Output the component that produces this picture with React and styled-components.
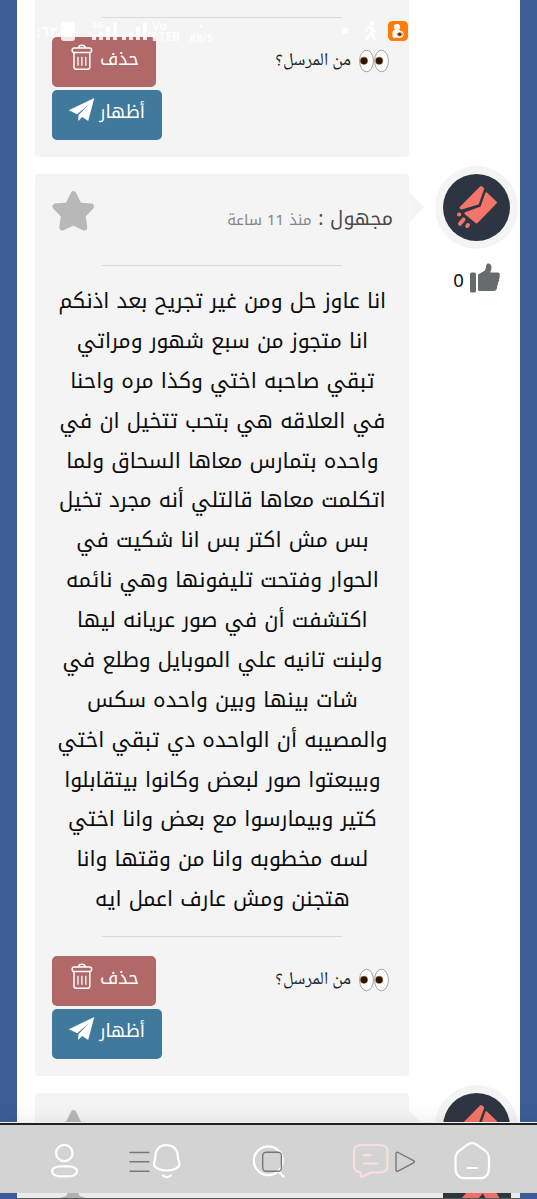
import styled, { createGlobalStyle } from "styled-components";

const GlobalStyle = createGlobalStyle`
  * {
    box-sizing: border-box;
  }

  body {
    margin: 0;
    font-family: "Noto Kufi Arabic", "Noto Sans", sans-serif;
  }
`;

const Page = styled.div`
  position: relative;
  height: 1199px;
  overflow: hidden;
  padding: 0 17px;
  background: #3d5c96;
`;

const Feed = styled.main`
  display: flex;
  flex-direction: column;
  gap: 17.5px;
  height: 1199px;
  padding-left: 18.4px;
  background: #fff;
`;

const Post = styled.article`
  display: flex;
  flex-shrink: 0;
`;

const Card = styled.section`
  width: 374px;
  height: ${({ $height }) => $height}px;
  flex-shrink: 0;
  background: #f4f4f4;
  border-radius: ${({ $cut }) => ($cut ? "0 0 4px 4px" : "4px")};
  padding: 0 16.5px;
  direction: rtl;
`;

const CutCard = styled(Card)`
  padding-top: 17px;
`;

const CardHeader = styled.header`
  display: flex;
  justify-content: space-between;
  height: 91px;
  padding-top: 16px;
`;

const Sender = styled.div`
  display: flex;
  align-items: baseline;
  height: 50px;
  margin-top: 3.5px;
  line-height: 50px;
  font-size: 19.6px;
  color: #4b4b4b;
  white-space: pre;
`;

const Time = styled.span`
  font-size: 15px;
  color: #858585;
`;

const Divider = styled.hr`
  width: 240px;
  height: 1px;
  margin: 0 auto;
  border: 0;
  background: #dadada;
`;

const Message = styled.p`
  margin: 16px -10px;
  text-align: center;
  font-size: 21.1px;
  line-height: 39.87px;
  color: #0d0d0d;
  white-space: pre-line;
`;

const CardFooter = styled.footer`
  display: flex;
  justify-content: space-between;
  align-items: flex-start;
  padding-top: 19px;
`;

const Question = styled.div`
  display: flex;
  align-items: center;
  gap: 8px;
  margin-right: 4px;
  height: 48px;
  font-family: "Noto Naskh Arabic", "Noto Sans", sans-serif;
  font-size: 18px;
  color: #222;
`;

const Actions = styled.div`
  display: flex;
  flex-direction: column;
  align-items: flex-end;
  gap: 2.5px;
`;

const ActionButton = styled.button`
  display: flex;
  justify-content: space-between;
  align-items: flex-start;
  width: ${({ $wide }) => ($wide ? 110.5 : 104)}px;
  height: 50px;
  padding: ${({ $wide }) => ($wide ? "0 17.5px 0 16px" : "0 17px 0 19px")};
  border: 0;
  border-radius: 5px;
  background: ${({ $wide }) => ($wide ? "#41799c" : "#b06868")};
  color: #fff;
  font-family: inherit;
  font-size: 18px;
  line-height: 44px;
  direction: rtl;

  svg {
    margin-top: 7px;
  }
`;

const Aside = styled.aside`
  display: flex;
  flex-direction: column;
  align-items: center;
  width: 110.5px;
  flex-shrink: 0;
`;

const AvatarRow = styled.div`
  display: flex;
  align-items: center;
  margin-top: -8.5px;
  width: 100%;
`;

const Arrow = styled.span`
  width: 15px;
  height: 30px;
  margin: 0 10.5px 0 0;
  background: #f4f4f4;
  clip-path: polygon(0 0, 100% 50%, 0 100%);
`;

const Avatar = styled.span`
  display: flex;
  width: 83px;
  height: 83px;
  padding: 8px;
  border-radius: 50%;
  background: #f4f4f4;
  flex-shrink: 0;
`;

const Likes = styled.div`
  display: flex;
  align-items: center;
  gap: 6px;
  margin: 16.5px 0 0 24px;
  font-family: "Noto Sans", sans-serif;
  font-size: 18.5px;
  line-height: 30px;
  color: #111;

  svg {
    margin-top: -5px;
  }
`;

// Phone overlays, drawn over the scrolled page
const StatusBar = styled.div`
  position: absolute;
  top: 20px;
  left: 35px;
  right: 129px;
  height: 24px;
  display: flex;
  align-items: flex-start;
  color: rgba(255, 255, 255, 0.85);
  font-family: "Noto Sans", "Noto Sans Arabic", sans-serif;
  font-weight: 700;
`;

const Clock = styled.span`
  display: flex;
  justify-content: flex-end;
  width: 25px;
  padding-right: 2px;
  font-size: 15px;
  line-height: 22px;
`;

const Battery = styled.span`
  width: 14px;
  height: 19px;
  margin: 2px 17px 0 1px;
  border-radius: 3px;
  background: rgba(255, 255, 255, 0.85);
`;

const Signal = styled.span`
  display: flex;
  align-items: flex-end;
  gap: 3px;
  width: 30px;
  height: 20px;

  i {
    width: 4px;
    background: rgba(255, 255, 255, 0.85);
  }
  i:nth-of-type(1) {
    height: 5px;
  }
  i:nth-of-type(2) {
    height: 8px;
  }
  i:nth-of-type(3) {
    height: 13px;
  }
  i:nth-of-type(4) {
    height: 18px;
  }
`;

const NetType = styled.span`
  width: 20px;
  margin-right: -20px;
  font-size: 8.5px;
  line-height: 10px;
`;

const Volte = styled.span`
  width: 34px;
  font-size: 12px;
  line-height: 11px;
  white-space: pre-line;
`;

const Speed = styled.span`
  width: 30px;
  font-size: 10px;
  line-height: 12px;
  text-align: center;
  white-space: pre-line;
`;

const StatusRight = styled.span`
  display: flex;
  align-items: center;
  gap: 10px;
  height: 22px;
  margin-left: auto;
`;

const Dot = styled.span`
  width: 6px;
  height: 6px;
  margin-right: 6px;
  border-radius: 50%;
  background: #fff;
`;

const Nav = styled.nav`
  position: absolute;
  top: 1122px;
  left: 0;
  right: 0;
  height: 71px;
  border-top: 1px solid #f2f2f2;
  background: #d3d3d3;
  box-shadow: 0 -2px 18px rgba(0, 0, 0, 0.08);

  &::before {
    content: "";
    display: block;
    height: 1.5px;
    background: #222;
  }

  svg {
    display: block;
  }
`;

const BottomStrip = styled.div`
  position: absolute;
  top: 1193px;
  left: 17px;
  right: 17px;
  height: 6px;
  overflow: hidden;
  display: flex;
  justify-content: space-between;
  background: #eaeaea;
  border-bottom: 1px solid #555;
  padding: 0 9px 0 43px;
`;

const StarSlice = styled.span`
  width: 26px;
  height: 5px;
  background: #b0b0b0;
  clip-path: polygon(30% 0, 70% 0, 76% 60%, 100% 100%, 0 100%, 24% 60%);
`;

const AvatarSlice = styled.span`
  display: flex;
  justify-content: flex-end;
  gap: 3px;
  width: 68px;
  height: 5px;
  padding-right: 13px;
  background: #2e3542;

  i {
    width: 17px;
    background: #ee6f65;
    transform: skewX(-40deg);
  }
  i + i {
    width: 14px;
    transform: skewX(30deg);
  }
`;

const TrashIcon = () => (
  <svg width="22" height="27" viewBox="0 0 22 27" fill="none" stroke="#fff" strokeWidth="1.5">
    <rect x="1.2" y="4" width="19.4" height="4.6" rx="2" />
    <path d="M7.5 4C7.8 .4 14 .4 14.3 4M3 8.8V23a2.3 2.3 0 0 0 2.3 2.3h11.2a2.3 2.3 0 0 0 2.3-2.3V8.8" />
    <path d="M7 12.8v9M10.9 12.8v9M14.8 12.8v9" strokeWidth="1.3" />
  </svg>
);

const PlaneIcon = () => (
  <svg width="27" height="26" viewBox="0 0 27 26" fill="#fff">
    <path d="M26.3 1 .8 13.2 9.2 17.2 21 7.2 10.4 18.2 10.2 24 14.2 20 20.2 24Z" />
  </svg>
);

const StarIcon = () => (
  <svg width="43" height="42" viewBox="0 0 43 42">
    <path
      d="M21.5 4.2 27 15.5 39 16.6 30.5 25.3 32.3 37.5 21.5 32.2 10.3 37.5 12 25.3 3.5 16.6 16 15.5Z"
      fill="#b8b8b8"
      stroke="#b8b8b8"
      strokeWidth="6"
      strokeLinejoin="round"
    />
  </svg>
);

const EyesIcon = () => (
  <svg width="30" height="24" viewBox="0 0 30 24">
    {[7.5, 22.5].map((x, i) => (
      <g key={x}>
        <ellipse cx={x} cy="12" rx="6.9" ry="10.8" fill="#fff" stroke="#999" strokeWidth=".9" />
        <circle cx={i ? 20.2 : 5} cy="11.8" r="4" fill="#b9824a" />
        <circle cx={i ? 20.2 : 5} cy="11.8" r="3.4" fill="#2b1608" />
      </g>
    ))}
  </svg>
);

const LogoIcon = () => (
  <svg width="67" height="67" viewBox="0 0 67 67">
    <circle cx="33.5" cy="33.5" r="33.5" fill="#2e3542" />
    <g fill="#f4756a" stroke="#f4756a" strokeWidth="2" strokeLinejoin="round">
      <path d="M38 13 40.2 14.6 35 29.5 18.5 34.5 17.5 33.8Z" />
      <path d="M43.3 19.2 53 28.5 33.5 48.5 22.3 39.3 38.3 33.5Z" />
    </g>
    <g stroke="#f4756a" strokeWidth="4" strokeLinecap="round">
      <path d="M16 40.5h.2M20.5 45.5 17 49.8M25 51l-.8 1" />
    </g>
  </svg>
);

const ThumbIcon = () => (
  <svg width="30" height="30" viewBox="0 0 30 30" fill="#686b6d">
    <rect y="9.5" width="6" height="20" rx="1.5" />
    <path d="M8 11.5 15 7.5C16.5 5.5 15.5.6 18 .6c4.5 0 4 5.4 2.2 9h7.3c2.2 0 2.8 1.8 2 3.5.3 1 .3 2-.5 3 .5 1.5 0 2.7-1 3.5.3 1.4-.2 2.6-1 3.4.4 3.5-1 5-3.5 5H9.5A1.5 1.5 0 0 1 8 26.5Z" />
  </svg>
);

const WalkIcon = () => (
  <svg width="14" height="20" viewBox="0 0 14 20" fill="none" stroke="#fff" strokeWidth="2" strokeLinecap="round">
    <circle cx="8" cy="2" r="1.2" fill="#fff" />
    <path d="M2 10 4 7 7 6 8 11 10.5 18.5M7 12 5 15 2 18.5M8 7l2 3 2.5 1" />
  </svg>
);

const AppIcon = () => (
  <svg width="20" height="20" viewBox="0 0 20 20">
    <rect width="20" height="20" rx="4.5" fill="#fd7c08" />
    <circle cx="9" cy="6" r="3.1" fill="#fff" />
    <path d="M4.5 16V11.5A2.8 2.8 0 0 1 7.3 8.8h4.5V16.8H5.5Z" fill="#fff" />
    <circle cx="12" cy="13.3" r="3.5" fill="#fff" />
    <path d="M8.6 13.3q3.2-3.5 6.4 0-3.2 3.4-6.4 0Z" fill="#eeb57d" stroke="#d46a1a" strokeWidth=".7" />
    <circle cx="11.6" cy="13.2" r="1.5" fill="#4b2510" />
  </svg>
);

const NavIcons = () => (
  <svg width="537" height="68" viewBox="0 1125 537 68" fill="none" strokeLinecap="round" strokeLinejoin="round">
    <g stroke="#fff" strokeWidth="2.2">
      <circle cx="64.3" cy="1153" r="8.2" />
      <rect x="52" y="1166.3" width="25" height="10" rx="8" ry="5" />
      <path d="M166.5 1145c-6.5 0-11 4.5-11 10.5 0 5-1.5 5.5-1.5 8.5 0 4 6 6.5 12.7 6.5s12.7-2.5 12.7-6.5c0-3-1.7-3.5-1.7-8.5 0-6-4.7-10.5-11.2-10.5ZM163 1175.5q3.7 3.5 7.8 0" />
      <circle cx="268.3" cy="1160.7" r="14.4" />
      <path d="m278.5 1171.5 5 5M467.5 1144.7c3-2.4 6-2.4 9 0l8.5 6c3 2 4 4.5 4 8v8.5c0 6-2.5 11-9 11h-15c-7 0-9.5-5-9.5-11v-8.5c0-3.5 1-6 4-8ZM467.5 1168h9.5" />
    </g>
    <g stroke="#f9dedb" strokeWidth="2.2">
      <path d="M361 1145h19c5 0 7.5 2.5 7.5 7.5V1165c0 5-2.5 7.5-7.5 7.5h-8.5l-9 4c-1.5.7-2-.5-1.5-4-4.5-.5-7-3-7-7.5v-12.5c0-5 2-7.5 7-7.5ZM364 1155.2h6.5M364 1163.5h13.5" />
    </g>
    <g stroke="#777" strokeWidth="1.4">
      <path d="M130 1152.5h19M130 1161.8h19M130 1171.2h19" />
      <rect x="262.7" y="1152.3" width="18.7" height="19" rx="3.5" />
      <path d="M396 1153.5c0-1 1-1.5 2-1l15.5 8.2c1.2.7 1.2 1.5 0 2.2l-15.5 8.2c-1 .5-2 0-2-1Z" />
    </g>
  </svg>
);

const message = `انا عاوز حل ومن غير تجريح بعد اذنكم
انا متجوز من سبع شهور ومراتي
تبقي صاحبه اختي وكذا مره واحنا
في العلاقه هي بتحب تتخيل ان في
واحده بتمارس معاها السحاق ولما
اتكلمت معاها قالتلي أنه مجرد تخيل
بس مش اكتر بس انا شكيت في
الحوار وفتحت تليفونها وهي نائمه
اكتشفت أن في صور عريانه ليها
ولبنت تانيه علي الموبايل وطلع في
شات بينها وبين واحده سكس
والمصيبه أن الواحده دي تبقي اختي
وبيبعتوا صور لبعض وكانوا بيتقابلوا
كتير وبيمارسوا مع بعض وانا اختي
لسه مخطوبه وانا من وقتها وانا
هتجنن ومش عارف اعمل ايه`;

const PostFooter = () => (
  <>
    <Divider />
    <CardFooter>
      <Question>
        <EyesIcon />
        <span>من المرسل؟</span>
      </Question>
      <Actions>
        <ActionButton>
          حذف
          <TrashIcon />
        </ActionButton>
        <ActionButton $wide>
          أظهار
          <PlaneIcon />
        </ActionButton>
      </Actions>
    </CardFooter>
  </>
);

const PostAside = ({ likes }) => (
  <Aside>
    <AvatarRow>
      <Arrow />
      <Avatar>
        <LogoIcon />
      </Avatar>
    </AvatarRow>
    {likes !== undefined && (
      <Likes>
        {likes}
        <ThumbIcon />
      </Likes>
    )}
  </Aside>
);

const SignalBars = () => (
  <Signal>
    <i />
    <i />
    <i />
    <i />
  </Signal>
);

const App = () => (
  <Page>
    <GlobalStyle />
    <Feed>
      <Post>
        <CutCard $height={156.5} $cut>
          <PostFooter />
        </CutCard>
      </Post>
      <Post>
        <Card $height={901.5}>
          <CardHeader>
            <Sender>
              مجهول : <Time>منذ 11 ساعة</Time>
            </Sender>
            <StarIcon />
          </CardHeader>
          <Divider />
          <Message>{message}</Message>
          <PostFooter />
        </Card>
        <PostAside likes={0} />
      </Post>
      <Post>
        <Card $height={106}>
          <CardHeader>
            <span />
            <StarIcon />
          </CardHeader>
        </Card>
        <PostAside />
      </Post>
    </Feed>

    <StatusBar>
      <Clock>:٦٢</Clock>
      <Battery />
      <NetType>4G⁺</NetType>
      <SignalBars />
      <SignalBars />
      <Volte>{"Vo\nLTEB"}</Volte>
      <Speed>{"•\nKB/S"}</Speed>
      <StatusRight>
        <Dot />
        <WalkIcon />
        <AppIcon />
      </StatusRight>
    </StatusBar>

    <Nav>
      <NavIcons />
    </Nav>
    <BottomStrip>
      <StarSlice />
      <AvatarSlice>
        <i />
        <i />
      </AvatarSlice>
    </BottomStrip>
  </Page>
);

export default App;
